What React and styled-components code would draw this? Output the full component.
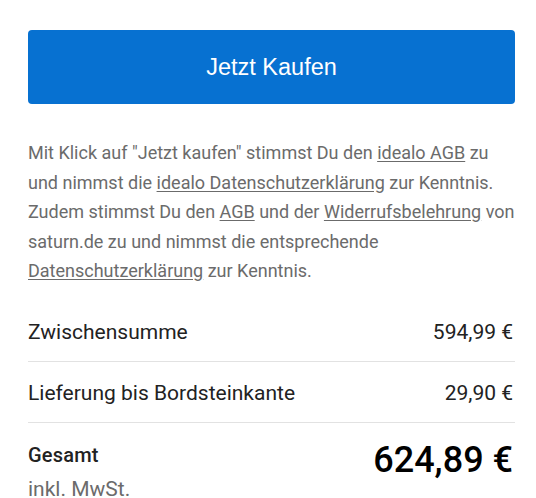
import React from 'react';
import styled, { createGlobalStyle } from 'styled-components';

const GlobalStyle = createGlobalStyle`
  body {
    margin: 0;
    background: #fff;
    font-family: Roboto, "Liberation Sans", sans-serif;
  }
`;

const Checkout = styled.section`
  width: 487px;
  margin: 0 0 0 28px;
  padding-top: 30px;
`;

const BuyButton = styled.button`
  display: block;
  width: 100%;
  height: 74px;
  border: none;
  border-radius: 4px;
  background-color: #0771d1;
  color: #fff;
  font-family: "Liberation Sans", Arial, sans-serif;
  font-size: 23.5px;
  cursor: pointer;
`;

const Legal = styled.p`
  margin: 34px 0 0;
  font-size: 18px;
  line-height: 29.5px;
  color: #6b6b6b;
`;

const LegalLink = styled.a`
  color: inherit;
  text-decoration: underline;
  text-underline-offset: 2px;
`;

const Summary = styled.div`
  margin-top: 15px;
`;

const Row = styled.div`
  display: flex;
  justify-content: space-between;
  align-items: center;
  padding: 19px 2px 17px 0;
  font-size: 21px;
  line-height: 24px;
  color: #222;
  border-bottom: 1px solid #e2e2e2;
`;

const TotalRow = styled.div`
  display: flex;
  justify-content: space-between;
  align-items: flex-start;
  padding: 20px 2px 0 0;
`;

const TotalLabel = styled.div`
  display: flex;
  flex-direction: column;
`;

const Strong = styled.span`
  font-size: 20px;
  font-weight: 500;
  letter-spacing: 0.2px;
  line-height: 24px;
  color: #222;
`;

const Tax = styled.span`
  margin-top: 10px;
  font-size: 21px;
  line-height: 24px;
  color: #6b6b6b;
`;

const TotalPrice = styled.span`
  font-size: 36px;
  font-weight: 500;
  line-height: 34px;
  color: #000;
`;

export default function App() {
  return (
    <>
      <GlobalStyle />
      <Checkout>
        <BuyButton>Jetzt Kaufen</BuyButton>
        <Legal>
          Mit Klick auf "Jetzt kaufen" stimmst Du den <LegalLink href="#">idealo AGB</LegalLink> zu
          und nimmst die <LegalLink href="#">idealo Datenschutzerklärung</LegalLink> zur Kenntnis.
          Zudem stimmst Du den <LegalLink href="#">AGB</LegalLink> und der{' '}
          <LegalLink href="#">Widerrufsbelehrung</LegalLink> von saturn.de zu und nimmst die
          entsprechende <LegalLink href="#">Datenschutzerklärung</LegalLink> zur Kenntnis.
        </Legal>
        <Summary>
          <Row>
            <span>Zwischensumme</span>
            <span>594,99 €</span>
          </Row>
          <Row>
            <span>Lieferung bis Bordsteinkante</span>
            <span>29,90 €</span>
          </Row>
          <TotalRow>
            <TotalLabel>
              <Strong>Gesamt</Strong>
              <Tax>inkl. MwSt.</Tax>
            </TotalLabel>
            <TotalPrice>624,89 €</TotalPrice>
          </TotalRow>
        </Summary>
      </Checkout>
    </>
  );
}
